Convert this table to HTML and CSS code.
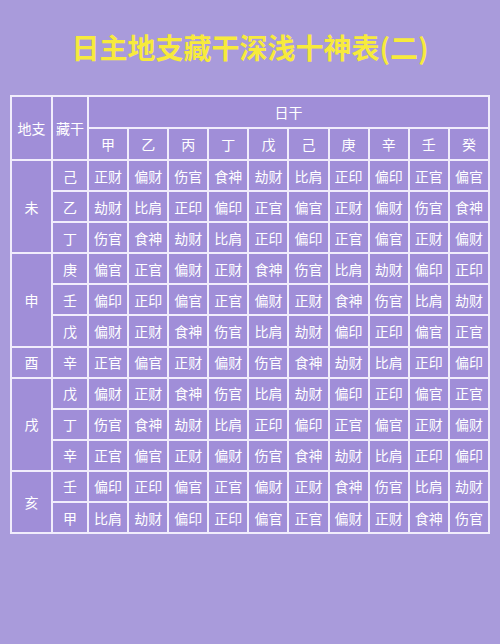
FILE: index.html
```html
<!DOCTYPE html>
<html lang="zh">
<head>
<meta charset="utf-8">
<link rel="stylesheet" href="styles.css">
</head>
<body>
<div class="page">
  <header class="title-bar"><h1 class="title">日主地支藏干深浅十神表(二)</h1></header>
  <table class="gods">
    <colgroup>
      <col class="c-branch"><col class="c-hidden">
      <col><col><col><col><col><col><col><col><col><col>
    </colgroup>
    <thead>
      <tr class="hrow">
        <th rowspan="2">地支</th><th rowspan="2">藏干</th><th colspan="10">日干</th>
      </tr>
      <tr class="hrow">
        <th>甲</th><th>乙</th><th>丙</th><th>丁</th><th>戊</th><th>己</th><th>庚</th><th>辛</th><th>壬</th><th>癸</th>
      </tr>
    </thead>
    <tbody>
      <tr><td rowspan="3">未</td><td>己</td><td>正财</td><td>偏财</td><td>伤官</td><td>食神</td><td>劫财</td><td>比肩</td><td>正印</td><td>偏印</td><td>正官</td><td>偏官</td></tr>
      <tr><td>乙</td><td>劫财</td><td>比肩</td><td>正印</td><td>偏印</td><td>正官</td><td>偏官</td><td>正财</td><td>偏财</td><td>伤官</td><td>食神</td></tr>
      <tr><td>丁</td><td>伤官</td><td>食神</td><td>劫财</td><td>比肩</td><td>正印</td><td>偏印</td><td>正官</td><td>偏官</td><td>正财</td><td>偏财</td></tr>
      <tr><td rowspan="3">申</td><td>庚</td><td>偏官</td><td>正官</td><td>偏财</td><td>正财</td><td>食神</td><td>伤官</td><td>比肩</td><td>劫财</td><td>偏印</td><td>正印</td></tr>
      <tr><td>壬</td><td>偏印</td><td>正印</td><td>偏官</td><td>正官</td><td>偏财</td><td>正财</td><td>食神</td><td>伤官</td><td>比肩</td><td>劫财</td></tr>
      <tr><td>戊</td><td>偏财</td><td>正财</td><td>食神</td><td>伤官</td><td>比肩</td><td>劫财</td><td>偏印</td><td>正印</td><td>偏官</td><td>正官</td></tr>
      <tr><td>酉</td><td>辛</td><td>正官</td><td>偏官</td><td>正财</td><td>偏财</td><td>伤官</td><td>食神</td><td>劫财</td><td>比肩</td><td>正印</td><td>偏印</td></tr>
      <tr><td rowspan="3">戌</td><td>戊</td><td>偏财</td><td>正财</td><td>食神</td><td>伤官</td><td>比肩</td><td>劫财</td><td>偏印</td><td>正印</td><td>偏官</td><td>正官</td></tr>
      <tr><td>丁</td><td>伤官</td><td>食神</td><td>劫财</td><td>比肩</td><td>正印</td><td>偏印</td><td>正官</td><td>偏官</td><td>正财</td><td>偏财</td></tr>
      <tr><td>辛</td><td>正官</td><td>偏官</td><td>正财</td><td>偏财</td><td>伤官</td><td>食神</td><td>劫财</td><td>比肩</td><td>正印</td><td>偏印</td></tr>
      <tr><td rowspan="2">亥</td><td>壬</td><td>偏印</td><td>正印</td><td>偏官</td><td>正官</td><td>偏财</td><td>正财</td><td>食神</td><td>伤官</td><td>比肩</td><td>劫财</td></tr>
      <tr><td>甲</td><td>比肩</td><td>劫财</td><td>偏印</td><td>正印</td><td>偏官</td><td>正官</td><td>偏财</td><td>正财</td><td>食神</td><td>伤官</td></tr>
    </tbody>
  </table>
</div>
</body>
</html>
```
FILE: styles.css
```css
html, body {
  margin: 0;
  padding: 0;
  background: #a99bdb;
}
.page {
  width: 500px;
  height: 644px;
  background: #a99bdb;
  font-family: "Noto Sans CJK SC", "Noto Sans", sans-serif;
}
.title-bar {
  height: 95px;
  display: flex;
  align-items: center;
  justify-content: center;
}
.title {
  margin: 0;
  padding-bottom: 2px;
  font-size: 28px;
  font-weight: 700;
  color: #f7ea3c;
  letter-spacing: 0;
  line-height: 1;
}
.gods {
  margin-left: 10px;
  width: 480px;
  table-layout: fixed;
  border-collapse: collapse;
  color: #ffffff;
  font-size: 14px;
}
.c-branch { width: 41px; }
.c-hidden { width: 36px; }
.gods th, .gods td {
  border: 2px solid #f1edfc;
  background: #a08ed8;
  text-align: center;
  vertical-align: middle;
  padding: 0;
  font-weight: 400;
  line-height: 1;
}
.gods .hrow { height: 32px; }
.gods tbody tr { height: 31.1px; }
```
